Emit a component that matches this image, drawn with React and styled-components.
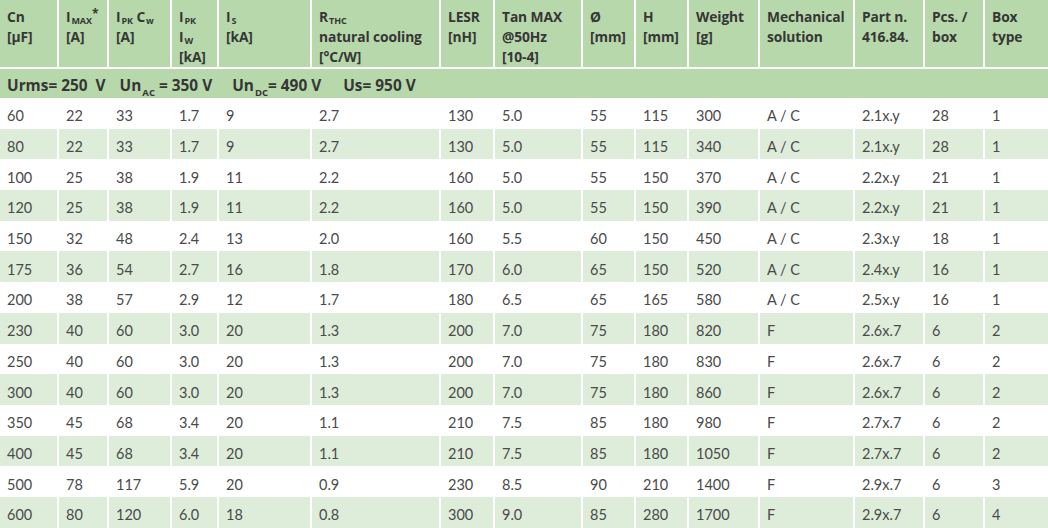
import styled, { createGlobalStyle } from 'styled-components';

const COLUMNS = '57px 48px 61px 45px 91px 127px 52px 86px 51px 51px 69px 93px 68px 58px 63px';

const GlobalStyle = createGlobalStyle`
  body {
    margin: 0;
    background: #fff;
    font-family: Lato, "Open Sans", "Liberation Sans", sans-serif;
  }
`;

const Sheet = styled.div`
  width: 1048px;
  background: #fff;
`;

const Row = styled.div`
  display: grid;
  grid-template-columns: ${COLUMNS};
  column-gap: 2px;
  height: ${(p) => p.$height}px;
`;

const HeadCell = styled.div`
  background: #b7d8aa;
  color: #363636;
  font-family: "Open Sans", Lato, sans-serif;
  font-weight: 700;
  font-size: 13.8px;
  letter-spacing: -0.1px;
  padding: 7px 0 0 7px;
  box-sizing: border-box;
  white-space: nowrap;
`;

const Line = styled.div`
  height: 20px;
  line-height: 20px;
`;

const Sub = styled.span`
  font-size: ${(p) => p.$size || 9}px;
  line-height: 0;
  vertical-align: ${(p) => p.$drop || -2}px;
  margin-left: 1px;
`;

const Sup = styled.span`
  font-size: 12px;
  line-height: 0;
  vertical-align: 4px;
`;

const SubBar = styled.div`
  margin-top: 2px;
  height: 29px;
  background: #b7d8aa;
  color: #363636;
  font-family: "Open Sans", Lato, sans-serif;
  font-weight: 700;
  font-size: 15.4px;
  display: flex;
  align-items: center;
  padding: 3px 0 0 7px;
  box-sizing: border-box;
  white-space: pre;
`;

const Segment = styled.span`
  margin-left: ${(p) => p.$space || 0}px;
`;

const Cell = styled.div`
  background: ${(p) => (p.$shade ? '#deedda' : '#fff')};
  color: #4a4a4a;
  font-size: 14.5px;
  display: flex;
  align-items: center;
  padding: 5px 0 0 7px;
  box-sizing: border-box;
  white-space: nowrap;
`;

const headers = [
  ['Cn', '[µF]'],
  [<>I<Sub>MAX</Sub><Sup>*</Sup></>, '[A]'],
  [<>I<Sub>PK</Sub> C<Sub>w</Sub></>, '[A]'],
  [<>I<Sub>PK</Sub></>, <>I<Sub>W</Sub></>, '[kA]'],
  [<>I<Sub>S</Sub></>, '[kA]'],
  [<>R<Sub>THC</Sub></>, 'natural cooling', '[°C/W]'],
  ['LESR', '[nH]'],
  ['Tan MAX', '@50Hz', '[10-4]'],
  ['Ø', '[mm]'],
  ['H', '[mm]'],
  ['Weight', '[g]'],
  ['Mechanical', 'solution'],
  ['Part n.', '416.84.'],
  ['Pcs. /', 'box'],
  ['Box', 'type'],
];

const rows = [
  ['60', '22', '33', '1.7', '9', '2.7', '130', '5.0', '55', '115', '300', 'A / C', '2.1x.y', '28', '1'],
  ['80', '22', '33', '1.7', '9', '2.7', '130', '5.0', '55', '115', '340', 'A / C', '2.1x.y', '28', '1'],
  ['100', '25', '38', '1.9', '11', '2.2', '160', '5.0', '55', '150', '370', 'A / C', '2.2x.y', '21', '1'],
  ['120', '25', '38', '1.9', '11', '2.2', '160', '5.0', '55', '150', '390', 'A / C', '2.2x.y', '21', '1'],
  ['150', '32', '48', '2.4', '13', '2.0', '160', '5.5', '60', '150', '450', 'A / C', '2.3x.y', '18', '1'],
  ['175', '36', '54', '2.7', '16', '1.8', '170', '6.0', '65', '150', '520', 'A / C', '2.4x.y', '16', '1'],
  ['200', '38', '57', '2.9', '12', '1.7', '180', '6.5', '65', '165', '580', 'A / C', '2.5x.y', '16', '1'],
  ['230', '40', '60', '3.0', '20', '1.3', '200', '7.0', '75', '180', '820', 'F', '2.6x.7', '6', '2'],
  ['250', '40', '60', '3.0', '20', '1.3', '200', '7.0', '75', '180', '830', 'F', '2.6x.7', '6', '2'],
  ['300', '40', '60', '3.0', '20', '1.3', '200', '7.0', '75', '180', '860', 'F', '2.6x.7', '6', '2'],
  ['350', '45', '68', '3.4', '20', '1.1', '210', '7.5', '85', '180', '980', 'F', '2.7x.7', '6', '2'],
  ['400', '45', '68', '3.4', '20', '1.1', '210', '7.5', '85', '180', '1050', 'F', '2.7x.7', '6', '2'],
  ['500', '78', '117', '5.9', '20', '0.9', '230', '8.5', '90', '210', '1400', 'F', '2.9x.7', '6', '3'],
  ['600', '80', '120', '6.0', '18', '0.8', '300', '9.0', '85', '280', '1700', 'F', '2.9x.7', '6', '4'],
];

export default function App() {
  return (
    <>
      <GlobalStyle />
      <Sheet>
        <Row $height={67}>
          {headers.map((lines, i) => (
            <HeadCell key={i}>
              {lines.map((line, j) => (
                <Line key={j}>{line}</Line>
              ))}
            </HeadCell>
          ))}
        </Row>
        <SubBar>
          <Segment>Urms= 250  V</Segment>
          <Segment $space={14}>Un<Sub $size={9.5} $drop={-5}>AC</Sub> = 350 V</Segment>
          <Segment $space={20}>Un<Sub $size={9.5} $drop={-5}>DC</Sub>= 490 V</Segment>
          <Segment $space={22}>Us= 950 V</Segment>
        </SubBar>
        {rows.map((row, i) => (
          <Row key={i} $height={30.7}>
            {row.map((val, j) => (
              <Cell key={j} $shade={i % 2 === 1}>{val}</Cell>
            ))}
          </Row>
        ))}
      </Sheet>
    </>
  );
}
